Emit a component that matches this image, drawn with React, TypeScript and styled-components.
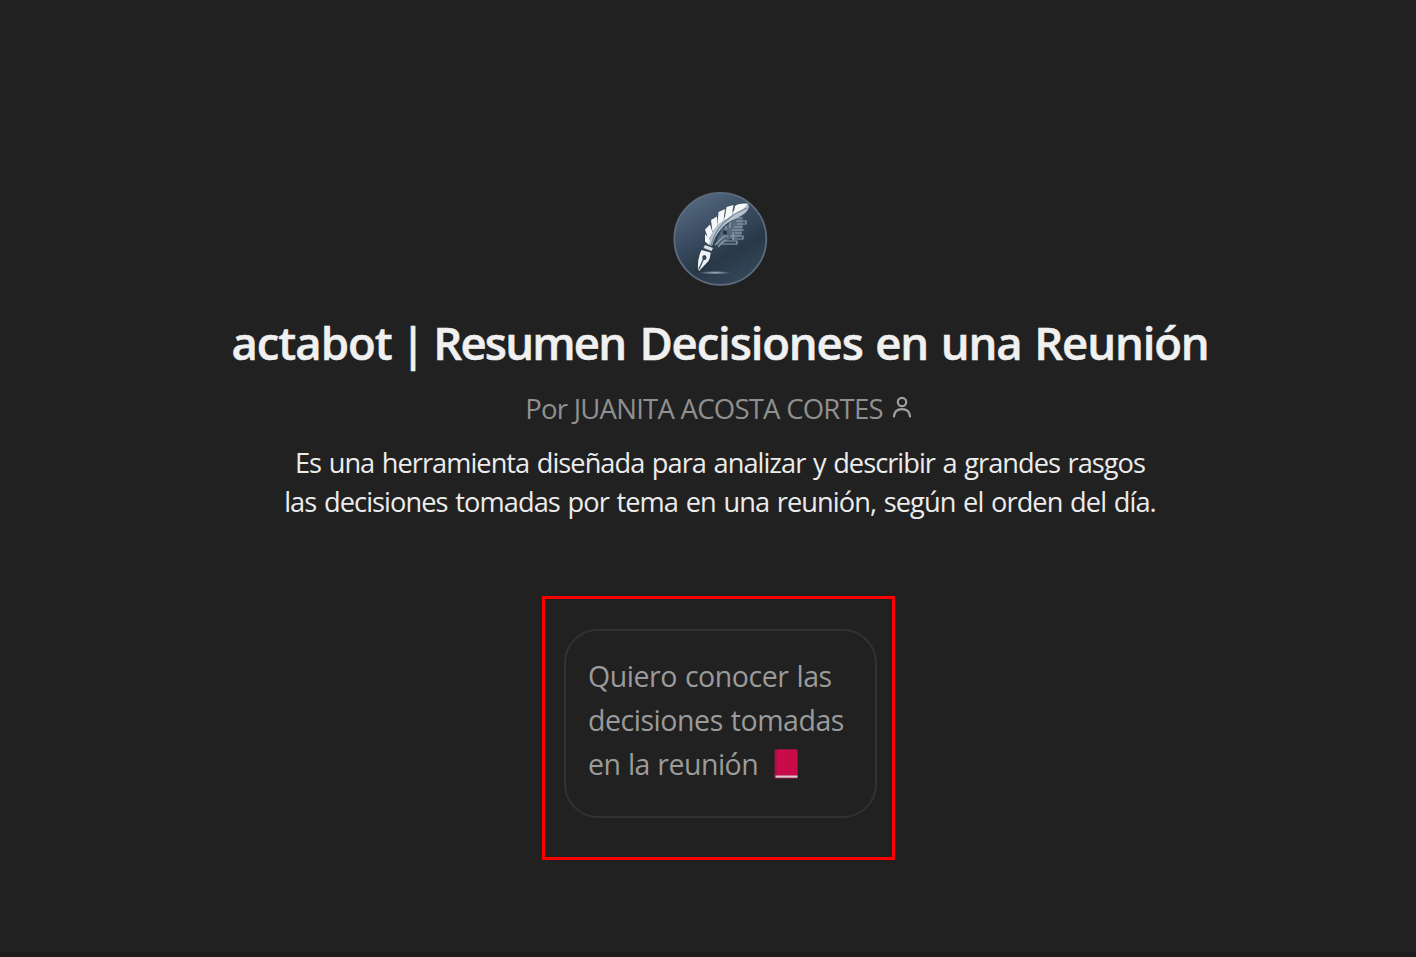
import React from "react";
import styled, { createGlobalStyle } from "styled-components";

const GlobalStyle = createGlobalStyle`
  *, *::before, *::after { box-sizing: border-box; }
  body {
    margin: 0;
    background: #212121;
    font-family: "Open Sans", "Noto Sans", sans-serif;
  }
`;

const Page = styled.main`
  display: flex;
  flex-direction: column;
  align-items: center;
  height: 957px;
  padding: 191px 0 0 24px;
  overflow: hidden;
  background: #212121;
  border-bottom: 5px solid #1c1b1d;
`;

const Avatar = styled.svg`
  display: block;
  flex: none;
  width: 96px;
  height: 96px;
`;

const Title = styled.h1`
  margin: 25px 0 0;
  font-size: 45.5px;
  font-weight: 600;
  line-height: 60px;
  color: #f0f0f0;
  white-space: nowrap;
  -webkit-text-stroke: 0.5px #f0f0f0;
`;

const Author = styled.div`
  display: flex;
  align-items: center;
  gap: 9px;
  margin: 17px 3px 0 0;
  font-size: 27.5px;
  line-height: 40px;
  color: #909090;
  white-space: nowrap;
`;

const AuthorIcon = styled.svg`
  width: 20px;
  height: 22px;
  margin-top: -4px;
`;

const Description = styled.p`
  display: flex;
  flex-direction: column;
  align-items: center;
  margin: 14px 0 0;
  font-size: 27.2px;
  line-height: 39px;
  color: #ececec;
`;

const Line = styled.span<{ $tracking: number; $wordGap?: number }>`
  letter-spacing: ${(p) => p.$tracking}px;
  word-spacing: ${(p) => p.$wordGap ?? 0}px;
  white-space: nowrap;
`;

const Highlight = styled.section`
  width: 353px;
  height: 264px;
  margin: 75px 3px 0 0;
  padding: 30px 15px 0 19px;
  border: 3px solid #ff0000;
`;

const Starter = styled.button`
  display: flex;
  flex-direction: column;
  align-items: flex-start;
  width: 313px;
  height: 189px;
  padding: 24px 0 0 22px;
  border: 2px solid #323232;
  border-radius: 34px;
  background: transparent;
  font-family: inherit;
  font-size: 28.5px;
  line-height: 43.8px;
  color: #9b9b9b;
  text-align: left;
`;

const LastLine = styled.span`
  display: flex;
  align-items: center;
  gap: 16px;
`;

const Book = styled.svg`
  width: 24px;
  height: 30px;
`;

export default function App() {
  return (
    <>
      <GlobalStyle />
      <Page>
        <Avatar viewBox="0 0 96 96" aria-hidden="true">
          <defs>
            <linearGradient id="disc" x1="0.15" y1="0" x2="0.7" y2="1">
              <stop offset="0" stopColor="#586c82" />
              <stop offset="0.4" stopColor="#3a4d62" />
              <stop offset="0.7" stopColor="#283848" />
              <stop offset="1" stopColor="#35475a" />
            </linearGradient>
            <radialGradient id="glow">
              <stop offset="0" stopColor="#a3b0bc" />
              <stop offset="1" stopColor="#a3b0bc" stopOpacity="0" />
            </radialGradient>
          </defs>
          <circle cx="48.3" cy="47.8" r="46" fill="url(#disc)" stroke="#5d6c7d" strokeWidth="1.8" />
          <ellipse cx="43" cy="81.7" rx="16" ry="1.8" fill="url(#glow)" />
          <path d="M43 54L50 38L62 29L70 27L71 33L69 46L58 48L47 54Z" fill="#62758a" opacity="0.75" />
          <g fill="none" stroke="#92a1b0" strokeWidth="1.2">
            <path d="M61 27H71M64 30H74V33H65M62 36H71M60 39H72M63 42H70M58 45H71V48H60M56 50H65V53H50M46 56L52 50H57M43 54L52 45H56" />
            <path d="M58 31V37M54 35V42M61 41V49" />
          </g>
          <rect x="51" y="39.5" width="4" height="4" fill="#24364a" />
          <path d="M77 14C77 21 70 25 61 29C51 33 43 44 40 55L36 53C39 41 47 29 58 22C66 17 72 16 77 14Z" fill="#b5c1cc" />
          <g fill="#f6f7f8">
            <path d="M76.5 13C71 12 65 13 63 15L61 25Q70 20 76.5 13Z" />
            <path d="M61.5 14L54.5 16L52.5 29L59.5 25.5Z" />
            <path d="M53 18L46.5 21L45.5 34L51.5 29Z" />
            <path d="M45 25.5L39 29L40.5 41L45.5 34Z" />
            <path d="M38 33.5L33 38.5L36.5 49L40.5 41.5Z" />
            <path d="M33 43L33 50.5L37 54L38 49Z" />
          </g>
          <path d="M75 17Q56 25 47 37Q41 46 39 55" fill="none" stroke="#6d7f91" strokeWidth="1.1" />
          <path d="M33 54L41 57L39.5 60L31.5 57Z" fill="#d9e0e6" />
          <path d="M29.5 59L38.5 61.5Q38.5 67 36.5 70L27 80L26 77Q25.5 67 29.5 59Z" fill="#f0f2f4" />
          <path d="M27 78L32 67" stroke="#42566b" strokeWidth="1.4" />
          <ellipse cx="32.4" cy="66.5" rx="2.1" ry="2.6" fill="#304358" />
        </Avatar>
        <Title>
          <Line $tracking={-1} $wordGap={-2.2}>actabot | </Line>
          <Line $tracking={-1.8} $wordGap={4}>Resumen </Line>
          <Line $tracking={-1.15} $wordGap={2}>Decisiones en una Reunión</Line>
        </Title>
        <Author>
          <Line $tracking={-0.75}>Por JUANITA ACOSTA CORTES</Line>
          <AuthorIcon viewBox="0 0 20 22" fill="none" stroke="#a0a0a0" strokeWidth="2.2" aria-hidden="true">
            <circle cx="10" cy="6" r="4.2" />
            <path d="M2 20.5C2.4 16 5.5 13.2 10 13.2S17.6 16 18 20.5" strokeLinecap="round" />
          </AuthorIcon>
        </Author>
        <Description>
          <Line $tracking={-0.97} $wordGap={1.5}>Es una herramienta diseñada para analizar y describir a grandes rasgos</Line>
          <Line $tracking={-0.92} $wordGap={1.5}>las decisiones tomadas por tema en una reunión, según el orden del día.</Line>
        </Description>
        <Highlight>
          <Starter type="button">
            <Line $tracking={-0.45} $wordGap={1}>Quiero conocer las</Line>
            <Line $tracking={-0.45} $wordGap={1}>decisiones tomadas</Line>
            <LastLine>
              <Line $tracking={-0.5} $wordGap={0.5}>en la reunión</Line>
              <Book viewBox="0 0 24 30" aria-hidden="true">
                <rect x="0.5" y="0.5" width="23" height="29" rx="1.5" fill="#a90f40" />
                <rect x="3" y="0.5" width="20.5" height="26" rx="0.8" fill="#ca0b4a" />
                <rect x="1.5" y="26.5" width="22" height="2.2" fill="#d9ccd1" />
              </Book>
            </LastLine>
          </Starter>
        </Highlight>
      </Page>
    </>
  );
}
